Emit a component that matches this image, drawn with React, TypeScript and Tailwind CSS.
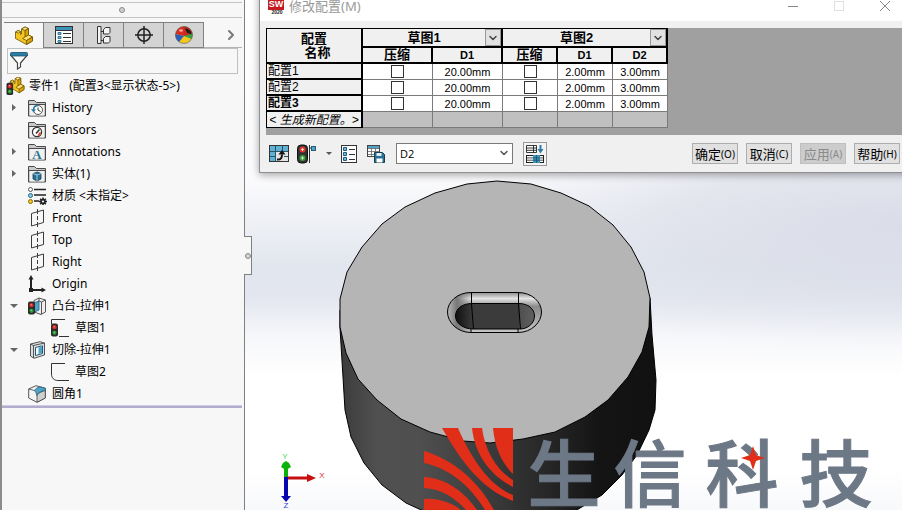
import React, { useState } from 'react';
import type { ReactNode } from 'react';
import { ChevronDown, ChevronRight } from 'lucide-react';
import { clsx } from 'clsx';

/* ---------- shared drawing parts ---------- */

function TrafficLight({ x = 0, y = 0 }: { x?: number; y?: number }) {
	return (
		<g transform={`translate(${x} ${y})`}>
			<rect x="0" y="0" width="7" height="13" rx="2" fill="#2b2b2b" />
			<circle cx="3.5" cy="3.7" r="2.1" fill="#e02a2a" />
			<circle cx="3.5" cy="9.3" r="2.1" fill="#2c9a32" />
			<circle cx="3.2" cy="3.2" r="0.7" fill="#ff9a90" />
			<circle cx="3.2" cy="8.8" r="0.7" fill="#86e08a" />
		</g>
	);
}

// L-shaped bracket seen from the upper right
function PartShape() {
	return (
		<g stroke="#6b5200" strokeWidth="0.8" strokeLinejoin="round">
			<path d="M1 6l2.500-1.500L6 5.500v3l1-.5V3l3.500-2L14 2.500V9l4 2v4l-6 3.500L1 12.500z" fill="#f4c521" />
			<path d="M7 3l3.500-2L14 2.500 10.500 4.500z" fill="#ffe88a" />
			<path d="M10.500 4.500L14 2.500V9l-3.500 2z" fill="#d9a20d" />
			<path d="M1 6l2.500-1.500L6 5.500 4 7z" fill="#ffe88a" />
			<path d="M10.500 11L14 9l4 2-6 3.500L8 12.500z" fill="#ffe06a" />
			<path d="M12 14.500L18 11v4l-6 3.500z" fill="#d9a20d" />
		</g>
	);
}

function FolderIcon({ children }: { children?: ReactNode }) {
	return (
		<svg className="h-[18px] w-[18px]" viewBox="0 0 18 18" aria-hidden="true">
			<path d="M.5 17V1.500h6l2 2h9V17z" fill="#c9c9c9" stroke="#4a4a4a" />
			<path d="M1 5.500h16" stroke="#4a4a4a" />
			<rect x="2" y="6" width="14" height="10.500" fill="#f1f1f1" />
			{children}
		</svg>
	);
}

function PlaneIcon() {
	return (
		<svg className="h-[18px] w-[18px]" viewBox="0 0 18 18" fill="none" stroke="#3c3c3c" aria-hidden="true">
			<path d="M3.500 4.500L15.500 1v12.500L3.500 17z" />
			<path d="M9.500 0v5M9.500 7v4M9.500 13v5" />
		</svg>
	);
}

/* ---------- feature tree ---------- */

interface TreeItem {
	id: string;
	label: string;
	icon: ReactNode;
	arrow?: 'open' | 'closed';
	nested?: boolean;
}

const treeItems: TreeItem[] = [
	{
		id: 'history',
		label: 'History',
		arrow: 'closed',
		icon: (
			<FolderIcon>
				<circle cx="10" cy="11" r="4.500" fill="#fff" stroke="#555" />
				<path d="M10 8.500V11l2.500 1.500" fill="none" stroke="#333" />
				<path d="M3 10l2.500 3.500L8 10.500z" fill="#2b7ea8" />
				<path d="M5.500 11c0-3 2-4.500 4.500-4.500" fill="none" stroke="#2b7ea8" strokeWidth="1.500" />
			</FolderIcon>
		),
	},
	{
		id: 'sensors',
		label: 'Sensors',
		icon: (
			<FolderIcon>
				<circle cx="9" cy="11" r="4.600" fill="#fff" stroke="#333" strokeWidth="1.200" />
				<path d="M9.500 15c2 0 3.500-1.500 3.500-4l-2 .5z" fill="#e4512b" />
				<path d="M8 12.500L11.500 8.500" stroke="#333" strokeWidth="1.500" />
			</FolderIcon>
		),
	},
	{
		id: 'annotations',
		label: 'Annotations',
		arrow: 'closed',
		icon: (
			<FolderIcon>
				<text x="9" y="15.500" textAnchor="middle" fontSize="13" fontWeight="700" fill="#2b7590" fontFamily="'Liberation Serif', serif">
					A
				</text>
			</FolderIcon>
		),
	},
	{
		id: 'solids',
		label: '实体(1)',
		arrow: 'closed',
		icon: (
			<FolderIcon>
				<path d="M5 8.500L9.500 7 13 8.500v5.500l-4 2-4-2z" fill="#2a6f93" stroke="#153f57" strokeWidth="0.8" />
				<path d="M5 8.500l4 1.500 4-1.500M9 10v6" fill="none" stroke="#bfe3f3" strokeWidth="0.8" />
			</FolderIcon>
		),
	},
	{
		id: 'material',
		label: '材质 <未指定>',
		icon: (
			<svg className="h-[18px] w-5" viewBox="0 0 20 18" aria-hidden="true">
				<path d="M6 2.500h12M6 8h12M6 14h5" stroke="#222" strokeWidth="1.600" />
				<circle cx="2.500" cy="2.500" r="2" fill="#fff" stroke="#555" />
				<circle cx="2.500" cy="8.500" r="2" fill="#7fd0f0" stroke="#27637d" />
				<circle cx="2.500" cy="14.500" r="2" fill="#f5c61d" stroke="#8a6c00" />
				<path d="M15 10.500v8M11 14.500h8M12.200 11.700l5.600 5.600M17.800 11.700l-5.600 5.600" stroke="#222" strokeWidth="1.600" />
				<circle cx="15" cy="14.500" r="2.800" fill="#222" />
				<circle cx="15" cy="14.500" r="1.100" fill="#f7f7f7" />
			</svg>
		),
	},
	{ id: 'front', label: 'Front', icon: <PlaneIcon /> },
	{ id: 'top', label: 'Top', icon: <PlaneIcon /> },
	{ id: 'right', label: 'Right', icon: <PlaneIcon /> },
	{
		id: 'origin',
		label: 'Origin',
		icon: (
			<svg className="h-[18px] w-[18px]" viewBox="0 0 18 18" aria-hidden="true">
				<path d="M3 15V3M3 15h12" stroke="#222" strokeWidth="2" />
				<path d="M3 0l2.500 4.500h-5zM18 15l-4.500-2.500v5z" fill="#222" />
				<rect x="1" y="13" width="4" height="4" fill="#222" />
			</svg>
		),
	},
	{
		id: 'boss',
		label: '凸台-拉伸1',
		arrow: 'open',
		icon: (
			<svg className="h-[18px] w-[18px]" viewBox="0 0 18 18" aria-hidden="true">
				<path d="M6 3.500L11 1l6.500 2v12L13 17.500 6 15z" fill="#eee" stroke="#444" strokeWidth="0.900" />
				<path d="M11 1v3l2.500 1v12M13.500 5l4-2" fill="none" stroke="#444" strokeWidth="0.900" />
				<path d="M5.500 6L11 4v9l-5.500 2.500z" fill="#4fa3c7" stroke="#1f5f7c" strokeWidth="0.8" />
				<TrafficLight x={0} y={4.500} />
			</svg>
		),
	},
	{
		id: 'sketch1',
		label: '草图1',
		nested: true,
		icon: (
			<svg className="h-[18px] w-[18px]" viewBox="0 0 18 18" aria-hidden="true">
				<path d="M.5 5V.5H14M8 17.500h10" fill="none" stroke="#333" />
				<TrafficLight x={0} y={4.500} />
			</svg>
		),
	},
	{
		id: 'cut',
		label: '切除-拉伸1',
		arrow: 'open',
		icon: (
			<svg className="h-[18px] w-[18px]" viewBox="0 0 18 18" aria-hidden="true">
				<path d="M2.500 3L12 .7l4.500 1.300V14L6 17.300 2.500 15z" fill="#ddd" stroke="#444" strokeWidth="0.900" />
				<path d="M2.500 3L5.500 4.500V17M5.500 4.500l11-2.500" fill="none" stroke="#444" strokeWidth="0.900" />
				<path d="M7.500 6.500l7-1.700v7.700l-7 2z" fill="#fff" stroke="#1f5f7c" />
				<path d="M10.500 6.500l3.500-.8v6.300l-3.500 1z" fill="#4fa3c7" />
			</svg>
		),
	},
	{
		id: 'sketch2',
		label: '草图2',
		nested: true,
		icon: (
			<svg className="h-[18px] w-[18px]" viewBox="0 0 18 18" aria-hidden="true">
				<path d="M14 .5H.5V11c0 4 2.500 6.500 6.500 6.500h11" fill="none" stroke="#333" />
			</svg>
		),
	},
	{
		id: 'fillet',
		label: '圆角1',
		icon: (
			<svg className="h-[18px] w-[18px]" viewBox="0 0 18 18" aria-hidden="true">
				<path d="M.7 4L8 .7l9.300 2.600v9.700L9 17.300.7 13z" fill="#f4f4f4" stroke="#444" strokeWidth="0.900" />
				<path d="M9 17.300V9l8.300-4v8z" fill="#cfcfcf" stroke="#444" strokeWidth="0.8" />
				<path d="M6.500 5.500C8 3 10.500 1.800 13 2l4.300 1.300v2.500C13.500 5.500 10.500 7 9 10.500c-.5-2-1.300-3.800-2.500-5z" fill="#4fa3c7" stroke="#1f5f7c" strokeWidth="0.8" />
				<path d="M.7 4L6.500 5.500" stroke="#444" strokeWidth="0.8" />
			</svg>
		),
	},
];

function TreeRow({ item }: { item: TreeItem }) {
	return (
		<li className={clsx('flex h-[22px] items-center', item.nested ? 'pl-[49px]' : 'pl-1')}>
			{!item.nested && (
				<span className="flex w-[22px] shrink-0 items-center pl-1">
					{item.arrow && (
						<button type="button" aria-label={`Toggle ${item.label}`}>
							<svg className="h-2 w-2" viewBox="0 0 8 8" fill="#666" aria-hidden="true">
								{item.arrow === 'closed' ? <path d="M2 0v7l4-3.500z" /> : <path d="M0 2h8L4 6z" />}
							</svg>
						</button>
					)}
				</span>
			)}
			<span className="flex w-6 shrink-0 items-center">{item.icon}</span>
			<span>{item.label}</span>
		</li>
	);
}

/* ---------- sidebar ---------- */

const tabs: { id: string; label: string; icon: ReactNode }[] = [
	{
		id: 'features',
		label: 'Feature tree',
		icon: (
			<svg className="h-5 w-5" viewBox="0 0 19 20" aria-hidden="true">
				<PartShape />
			</svg>
		),
	},
	{
		id: 'properties',
		label: 'Properties',
		icon: (
			<svg className="h-[18px] w-[18px]" viewBox="0 0 18 18" aria-hidden="true">
				<rect x=".5" y=".5" width="17" height="17" fill="#fff" stroke="#333" />
				<path d="M1 1h16v3H1z" fill="#3d93b8" />
				<path d="M1 4.500h16" stroke="#333" />
				<path d="M3 6.500h3v2H3zM3 10.500h3v2H3zM3 14.500h3v2H3z" fill="#6bbbdc" stroke="#1f5f7c" strokeWidth="0.800" />
				<path d="M8 7.500h8M8 11.500h8M8 15.500h8" stroke="#333" />
			</svg>
		),
	},
	{
		id: 'configurations',
		label: 'Configurations',
		icon: (
			<svg className="h-[18px] w-4" viewBox="0 0 16 18" fill="#f4f4f4" stroke="#333" aria-hidden="true">
				<path d="M1.500 17.500V.5H5v17zM5 5.500h3M5 14.500h3" />
				<path d="M7.500 3.500l2-2h4.500v5l-1.500 1.500h-5zM7.500 12.500l2-2h4.500v5l-1.500 1.500h-5z" />
			</svg>
		),
	},
	{
		id: 'dimxpert',
		label: 'Dimensions',
		icon: (
			<svg className="h-[18px] w-[18px]" viewBox="0 0 18 18" fill="none" stroke="#222" strokeWidth="1.500" aria-hidden="true">
				<circle cx="9" cy="9" r="6.200" />
				<path d="M9 0v18M0 9h18" />
			</svg>
		),
	},
	{
		id: 'display',
		label: 'Display',
		icon: (
			<svg className="h-[18px] w-[18px]" viewBox="0 0 18 18" aria-hidden="true">
				<circle cx="9" cy="9" r="8.500" fill="#f3c81c" />
				<path d="M9 10L.5 8A8.500 8.500 0 0 1 9 .5z" fill="#d92b1f" />
				<path d="M.5 8L9 10l-5 6A8.500 8.500 0 0 1 .5 8z" fill="#2a5fc0" />
				<path d="M9 .5a8.500 8.500 0 0 1 7.500 12.500L9 10z" fill="#36a044" />
				<path d="M9 .5a8.500 8.500 0 0 1 8.400 7L9 10z" fill="#c42a22" />
				<path d="M10 2.500c3.500 0 6 2.500 6.500 6L12 6.500z" fill="#1b1b1b" />
				<ellipse cx="6" cy="4.500" rx="2" ry="1.300" fill="#fff" opacity="0.600" />
				<circle cx="9" cy="9" r="8.500" fill="none" stroke="#555" strokeWidth="0.600" />
			</svg>
		),
	},
];

function Sidebar() {
	const [activeTab, setActiveTab] = useState('features');

	return (
		<aside className="relative z-10 flex w-[245px] shrink-0 flex-col border-r border-[#808080] bg-[#f7f7f7]">
			<div className="flex min-h-0 flex-1 flex-col border-l-2 border-[#8c8c8c] pr-0.5">
				<div className="mt-0.5 flex h-4 items-center justify-center border-y border-[#c4c4c4]">
					<span className="h-1.5 w-1.5 rounded-full border border-[#8a8a8a] bg-[#d0d0d0]" />
				</div>

				<div className="mt-1 flex pl-0.5">
					<div role="tablist" className="flex h-[26px] border-t border-[#808080]">
						{tabs.map((tab) => (
							<button
								key={tab.id}
								type="button"
								role="tab"
								aria-label={tab.label}
								aria-selected={tab.id === activeTab}
								onClick={() => setActiveTab(tab.id)}
								className={clsx(
									'flex w-10 items-center justify-center border-r border-[#808080]',
									tab.id === activeTab ? 'bg-[#f7f7f7]' : 'border-b bg-[#d4d4d4]',
								)}
							>
								{tab.icon}
							</button>
						))}
					</div>
					<button type="button" aria-label="More tabs" className="flex flex-1 items-center justify-end border-b border-[#b4b4b4] pr-[3px] text-[#777]">
						<ChevronRight size={16} strokeWidth={3} />
					</button>
				</div>

				<label className="mr-1 ml-[5px] flex h-[26px] items-center border border-[#c0c0c0] pl-0.5">
					<svg className="h-[18px] w-[18px] shrink-0" viewBox="0 0 18 18" aria-hidden="true">
						<path d="M1 3.500l6.500 7.500v6l3-2v-4L17 3.500z" fill="#fff" stroke="#444" strokeWidth="1.200" />
						<rect x=".5" y=".5" width="17" height="3.500" rx="1" fill="#2b7ea8" stroke="#164b66" strokeWidth="0.800" />
					</svg>
					<input type="text" aria-label="Filter" className="min-w-0 flex-1 bg-transparent outline-none" />
				</label>

				<div className="mt-px flex h-[22px] items-center pl-1">
					<svg className="mr-1 h-[19px] w-[19px] shrink-0" viewBox="0 0 19 20" aria-hidden="true">
						<g transform="translate(3 -1) scale(.86 .95)">
							<PartShape />
						</g>
						<TrafficLight x={0} y={6} />
					</svg>
					<span className="whitespace-pre">零件1   (配置3&lt;显示状态-5&gt;)</span>
				</div>
				<ul>
					{treeItems.map((item) => (
						<TreeRow key={item.id} item={item} />
					))}
				</ul>
				<div className="h-[3px] border-t border-[#cfcbe0] bg-[#b2adcc]" />
			</div>

			{/* Splitter handle sticks out over the viewport */}
			<button
				type="button"
				aria-label="Collapse panel"
				className="absolute top-[236px] left-full flex h-[39px] w-2 items-center justify-center border-y border-r border-[#808080] bg-[#f7f7f7]"
			>
				<span className="h-1.5 w-1.5 rounded-full border border-[#8a8a8a] bg-[#d0d0d0]" />
			</button>
		</aside>
	);
}

/* ---------- model view ---------- */

const logoGlyphs = [
	{ char: '生', x: 564 },
	{ char: '信', x: 650 },
	{ char: '科', x: 742 },
	{ char: '技', x: 836 },
];

function ModelView() {
	return (
		<svg className="absolute inset-0 h-full w-full" viewBox="245 0 657 510" preserveAspectRatio="xMinYMin slice" role="img" aria-label="Model view">
			<defs>
				<linearGradient id="sky" x1="0" y1="0" x2="0" y2="1">
					<stop offset="0" stopColor="#ffffff" />
					<stop offset="0.35" stopColor="#fbfbfd" />
					<stop offset="0.52" stopColor="#e2e6ee" />
					<stop offset="0.58" stopColor="#e3e6ef" />
					<stop offset="0.66" stopColor="#f6f7fa" />
					<stop offset="0.74" stopColor="#ffffff" />
					<stop offset="0.92" stopColor="#ffffff" />
					<stop offset="1" stopColor="#f8f9fb" />
				</linearGradient>
				<radialGradient id="haze" gradientUnits="userSpaceOnUse" cx="0" cy="0" r="1" gradientTransform="translate(900 225) scale(460 125)">
					<stop offset="0" stopColor="#dadde8" />
					<stop offset="0.5" stopColor="#dcdfe9" stopOpacity="0.7" />
					<stop offset="1" stopColor="#e2e6ef" stopOpacity="0" />
				</radialGradient>
				<linearGradient id="side" x1="0" y1="0" x2="1" y2="0">
					<stop offset="0" stopColor="#3c3c3c" />
					<stop offset="0.12" stopColor="#505050" />
					<stop offset="0.25" stopColor="#4f4f4f" />
					<stop offset="0.5" stopColor="#383838" />
					<stop offset="0.68" stopColor="#242424" />
					<stop offset="0.82" stopColor="#141414" />
					<stop offset="1" stopColor="#111111" />
				</linearGradient>
				<linearGradient id="bevel" x1="0" y1="0" x2="0" y2="1">
					<stop offset="0" stopColor="#8c8c8c" />
					<stop offset="0.15" stopColor="#e4e4e4" />
					<stop offset="0.35" stopColor="#8a8a8a" />
					<stop offset="1" stopColor="#c6c6c6" />
				</linearGradient>
				<linearGradient id="bevelLeft" x1="0" y1="0" x2="1" y2="0">
					<stop offset="0" stopColor="#b8b8b8" />
					<stop offset="0.4" stopColor="#777777" />
					<stop offset="1" stopColor="#777777" stopOpacity="0" />
				</linearGradient>
				<linearGradient id="pocket" x1="0" y1="0" x2="1" y2="0">
					<stop offset="0" stopColor="#101010" />
					<stop offset="0.22" stopColor="#3b3b3b" />
					<stop offset="0.8" stopColor="#3b3b3b" />
					<stop offset="0.82" stopColor="#505050" />
					<stop offset="1" stopColor="#606060" />
				</linearGradient>
			</defs>

			<rect x="245" y="0" width="657" height="510" fill="url(#sky)" />
			<rect x="245" y="0" width="657" height="510" fill="url(#haze)" />

			{/* cylinder */}
			<path
				d="M340 310L340 328 345 410 351 437 364 463 382 485 406 503 430 514H570L602 495 622 475 637 455 649 430 655 410 656 380 652 335 650 298z"
				fill="url(#side)"
				stroke="#000"
			/>
			<path
				d="M497 181L531 184 561 193 589 206 613 225 631 247 644 272 650 298 649 327 642 352 628 377 608 400 585 417 555 432 523 439 490 443 463 441 430 432 401 419 377 400 358 379 346 353 340 327 340 299 347 272 362 247 382 224 405 207 435 193 467 184z"
				fill="#b5b5b5"
				stroke="#000"
			/>

			{/* slot */}
			<path d="M471 292.500H518C532 292.500 541.500 302 541.500 312S532 332.500 518 332.500H471C457 332.500 447.500 322 447.500 312S457 292.500 471 292.500z" fill="url(#bevel)" />
			<path d="M471 292.500C457 292.500 447.500 302 447.500 312S457 332.500 471 332.500z" fill="url(#bevelLeft)" />
			<path d="M472 303.500H519C528 303.500 534.500 309 534.500 316S528 329 520 329H473C463 329 455.500 323 455.500 316S462 303.500 472 303.500z" fill="url(#pocket)" stroke="#000" />
			<path
				d="M471 292.500H518C532 292.500 541.500 302 541.500 312S532 332.500 518 332.500H471C457 332.500 447.500 322 447.500 312S457 292.500 471 292.500zM471.500 293v11l2 25M471 329v3M518.500 293v11l2 25M518 329v3"
				fill="none"
				stroke="#000"
			/>

			{/* orientation triad */}
			<g>
				<path d="M286 478v-12" stroke="#0ab30a" strokeWidth="4" />
				<path d="M281 467l2-4 3-2 3 2 2 4-5 3z" fill="#0ab30a" />
				<path d="M286 478h24" stroke="#c80f0f" strokeWidth="3" />
				<path d="M307 474l9 4-9 4z" fill="#c80f0f" />
				<path d="M286 477v20" stroke="#0707b0" strokeWidth="4" />
				<path d="M281 496h10l-5 6z" fill="#0707b0" />
				<g fontFamily="'Liberation Sans', Arial, sans-serif" fontSize="8" textAnchor="middle">
					<text x="285" y="459" fill="#3fdc3f">Y</text>
					<text x="322" y="478" fill="#e03030">X</text>
					<text x="286" y="508" fill="#2a3fe0">Z</text>
				</g>
			</g>

			{/* logo */}
			<g fill="#e02e18">
				<path d="M493 428h20v46c-10-10-18-24-20-46z" />
				<path d="M472 428h10c3 22 14 42 31 52v7c-23-12-38-32-41-59z" />
				<path d="M442 428h16c14 32 32 58 55 67v6c-31-12-51-38-71-73z" />
				<path d="M424 451c30 9 54 30 70 59h-9c-16-26-37-42-61-47z" />
				<path d="M424 477c21 1 40 14 53 33h-11c-12-13-25-21-42-22z" />
				<path d="M424 499c14-1 26 3 37 11h-37z" />
			</g>
			<g
				fill="#6d7886"
				stroke="#6d7886"
				strokeWidth="1"
				fontFamily="'Noto Sans CJK SC', sans-serif"
				fontWeight="500"
				fontSize="73"
				textAnchor="middle"
			>
				{logoGlyphs.map((glyph) => (
					<text key={glyph.char} x={glyph.x} y="501">
						{glyph.char}
					</text>
				))}
			</g>
			<path d="M753 446l3 9 9 3-9 3-3 9-3-9-9-3 9-3z" fill="#e02e18" />
		</svg>
	);
}

/* ---------- configuration dialog ---------- */

const configRows = [
	{ name: '配置1', active: false, values: ['20.00mm', '2.00mm', '3.00mm'] },
	{ name: '配置2', active: false, values: ['20.00mm', '2.00mm', '3.00mm'] },
	{ name: '配置3', active: true, values: ['20.00mm', '2.00mm', '3.00mm'] },
];

function SuppressBox({ label }: { label: string }) {
	return (
		<td className="border-r border-b border-[#7a7a7a] bg-white p-0">
			<input
				type="checkbox"
				aria-label={label}
				className="mx-auto block h-[13px] w-[13px] appearance-none border border-[#333] bg-white checked:bg-[#2b7ea8]"
			/>
		</td>
	);
}

function ValueCell({ children }: { children: ReactNode }) {
	return <td className="border-r border-b border-[#7a7a7a] bg-white p-0 text-center">{children}</td>;
}

function GroupHeader({ title, span }: { title: string; span: number }) {
	return (
		<th colSpan={span} scope="colgroup" className="border-t border-r-2 border-b-2 border-black p-0">
			<div className="flex h-[17px] items-center">
				<span className="flex-1 text-center text-[13px] leading-4">{title}</span>
				<button
					type="button"
					aria-label={`${title} options`}
					className="flex h-[17px] w-4 items-center justify-center border border-[#999] bg-[#e1e1e1] text-[#444]"
				>
					<ChevronDown size={12} strokeWidth={3} className="shrink-0" />
				</button>
			</div>
		</th>
	);
}

const subHeader = 'border-r-2 border-b-2 border-black p-0 text-center leading-3';

function ConfigTable() {
	return (
		<table className="w-[402px] table-fixed border-separate border-spacing-0 border-l border-black font-['Liberation_Sans','Noto_Sans_CJK_SC',sans-serif] text-[11px] leading-[14px] text-black">
			<colgroup>
				<col className="w-[96px]" />
				<col className="w-[70px]" />
				<col className="w-[70px]" />
				<col className="w-[55px]" />
				<col className="w-[55px]" />
				<col className="w-[55px]" />
			</colgroup>
			<thead className="bg-[#f0f0f0] font-bold">
				<tr className="h-5">
					<th rowSpan={2} scope="col" className="border-t border-r-2 border-b-2 border-black p-0 text-[13px] leading-[14px]">
						配置
						<br />
						&nbsp;&nbsp;名称
					</th>
					<GroupHeader title="草图1" span={2} />
					<GroupHeader title="草图2" span={3} />
				</tr>
				<tr className="h-4">
					<th scope="col" className={clsx(subHeader, 'text-[13px]')}>压缩</th>
					<th scope="col" className={subHeader}>D1</th>
					<th scope="col" className={clsx(subHeader, 'text-[13px]')}>压缩</th>
					<th scope="col" className={subHeader}>D1</th>
					<th scope="col" className={subHeader}>D2</th>
				</tr>
			</thead>
			<tbody>
				{configRows.map((row) => (
					<tr key={row.name} className="h-4">
						<th
							scope="row"
							className={clsx(
								'border-r-2 border-b-2 border-black bg-[#f0f0f0] p-0 pl-px text-left text-[12px] leading-[14px]',
								row.active ? 'font-bold' : 'font-normal',
							)}
						>
							{row.name}
						</th>
						<SuppressBox label={`${row.name} 草图1 压缩`} />
						<ValueCell>{row.values[0]}</ValueCell>
						<SuppressBox label={`${row.name} 草图2 压缩`} />
						<ValueCell>{row.values[1]}</ValueCell>
						<ValueCell>{row.values[2]}</ValueCell>
					</tr>
				))}
				<tr className="h-4 bg-[#c0c0c0]">
					<th scope="row" className="border-r-2 border-b border-black bg-[#f0f0f0] p-0 text-center text-[12px] leading-[14px] font-normal whitespace-nowrap italic">
						&lt; 生成新配置。&gt;
					</th>
					{[1, 2, 3, 4, 5].map((n) => (
						<td key={n} className="border-r border-b border-[#7a7a7a] p-0" />
					))}
				</tr>
			</tbody>
		</table>
	);
}

function ToolIcon({ label, children, className }: { label: string; children: ReactNode; className?: string }) {
	return (
		<button type="button" aria-label={label} className={clsx('flex shrink-0 items-center justify-center', className)}>
			{children}
		</button>
	);
}

function DialogToolbar() {
	return (
		<div className="flex h-[37px] items-center pr-[11px] pl-[9px]">
			<ToolIcon label="Link table">
				<svg className="h-[18px] w-5" viewBox="0 0 20 18" aria-hidden="true">
					<rect x=".5" y=".5" width="19" height="16" fill="#e4e4e4" stroke="#333" />
					<path d="M1 1h18v5H1zM1 6h5v10H1z" fill="#5fb0d2" />
					<path d="M1 6.500h18M1 11.500h5M15 11.500h4M6.500 1v15M13.500 1v5" stroke="#2a5568" />
					<path d="M8 14.500c4 .5 5-2 5-5" fill="none" stroke="#111" strokeWidth="2" />
					<path d="M9.500 9.500h7L13 5z" fill="#111" />
				</svg>
			</ToolIcon>
			<ToolIcon label="Suppression" className="ml-2">
				<svg className="h-5 w-5" viewBox="0 0 20 20" aria-hidden="true">
					<rect x=".5" y="1" width="10" height="18" rx="3.500" fill="#333" stroke="#111" />
					<circle cx="5.500" cy="5.500" r="3" fill="#e23a2a" />
					<circle cx="5.500" cy="14" r="3" fill="#3ba03a" />
					<path d="M5.500 4v3M4 5.500h3M5.500 12.500v3M4 14h3" stroke="#fff" strokeWidth="0.700" />
					<path d="M12.500 1v18M13 4h2" stroke="#333" />
					<rect x="14.500" y="2.500" width="4" height="4" fill="#4fa3c7" stroke="#1f5f7c" />
				</svg>
			</ToolIcon>
			<ToolIcon label="Suppression menu" className="ml-2">
				<svg className="h-2 w-2" viewBox="0 0 8 8" fill="#555" aria-hidden="true">
					<path d="M1 2h6L4 5z" />
				</svg>
			</ToolIcon>
			<ToolIcon label="Properties" className="ml-2">
				<svg className="h-[18px] w-4" viewBox="0 0 16 18" aria-hidden="true">
					<rect x=".5" y=".5" width="15" height="17" fill="#fff" stroke="#333" />
					<path d="M2.500 2.500h3v3h-3zM2.500 7.500h3v3h-3zM2.500 12.500h3v3h-3z" fill="#6bbbdc" stroke="#1f5f7c" />
					<path d="M8 4.500h6M8 9.500h6M8 14.500h6" stroke="#333" />
				</svg>
			</ToolIcon>
			<ToolIcon label="Save table view" className="ml-[10px]">
				<svg className="h-[18px] w-[18px]" viewBox="0 0 18 18" aria-hidden="true">
					<rect x=".5" y=".5" width="12" height="11" fill="#fff" stroke="#444" />
					<path d="M1 1h11v2.500H1z" fill="#4fa3c7" />
					<path d="M1 3.500h11M1 6.500h11M1 9.500h11M4.500 3v8M8.500 3v8" stroke="#666" strokeWidth="0.800" />
					<path d="M7.500 7.500h8l2 2v8h-10z" fill="#2b6f93" stroke="#173c50" />
					<path d="M9.500 8h5v3h-5z" fill="#dfeef5" />
					<path d="M9.500 13.500h6v4h-6z" fill="#fff" />
				</svg>
			</ToolIcon>

			<div className="relative ml-[11px] h-[21px] w-[117px]">
				<select
					aria-label="Table view"
					defaultValue="D2"
					className="h-full w-full appearance-none border border-[#7a7a7a] bg-white pl-[3px] font-['Open_Sans','Noto_Sans_CJK_SC',sans-serif] text-[11px] leading-4 text-black"
				>
					<option>D2</option>
					<option>D1</option>
				</select>
				<ChevronDown size={12} strokeWidth={3} className="pointer-events-none absolute top-1 right-[3px] text-[#555]" />
			</div>

			<ToolIcon label="Apply to all" className="ml-[10px] h-6 w-6 border border-[#999] bg-[#f4f4f4]">
				<svg className="h-[18px] w-[18px]" viewBox="0 0 18 18" aria-hidden="true">
					<path d="M.5.5h10v7H.5zM.5 3h10M.5 5.300h10M7.500.5v7" fill="#fff" stroke="#222" strokeWidth="0.900" />
					<path d="M14.500 0v5" stroke="#2b7ea8" strokeWidth="2" />
					<path d="M11.500 4h6L14.500 8.500z" fill="#2b7ea8" />
					<rect x=".5" y="10.500" width="17" height="7" fill="#fff" stroke="#222" />
					<path d="M1 12.900h16M1 15.200h16" stroke="#222" strokeWidth="0.800" />
					<path d="M7 10h7v8H7z" fill="#3d93b8" />
					<path d="M7 12.900h7M7 15.200h7M10.500 10v8" stroke="#174a63" strokeWidth="0.700" />
				</svg>
			</ToolIcon>

			<div className="ml-auto flex gap-2">
				<DialogButton text="确定" hotkey="O" />
				<DialogButton text="取消" hotkey="C" />
				<DialogButton text="应用" hotkey="A" disabled />
				<DialogButton text="帮助" hotkey="H" />
			</div>
		</div>
	);
}

function DialogButton({ text, hotkey, disabled = false }: { text: string; hotkey: string; disabled?: boolean }) {
	return (
		<button
			type="button"
			disabled={disabled}
			className="flex h-[21px] w-[46px] items-center justify-center border border-[#adadad] bg-[#e1e1e1] text-[13px] leading-4 whitespace-nowrap text-black disabled:border-[#bfbfbf] disabled:bg-[#cccccc] disabled:text-[#8a8a8a]"
		>
			{text}
			<span className="text-[10px]">({hotkey})</span>
		</button>
	);
}

function ConfigDialog() {
	return (
		<section
			role="dialog"
			aria-label="修改配置"
			className="absolute -top-[10px] -right-[10px] left-[14px] border border-[#8f8f8f] bg-[#f0f0f0] shadow-[0_2px_8px_rgba(0,0,0,0.35)]"
		>
			<header className="flex h-[30px] items-center bg-white pr-5 pl-2 text-[#999]">
				<svg className="h-[18px] w-[17px]" viewBox="0 0 17 18" aria-hidden="true">
					<rect x="0" y="0" width="16" height="13" fill="#c31b20" />
					<g fontFamily="'Liberation Sans', Arial, sans-serif" fontWeight="700" textAnchor="middle">
						<text x="8" y="10" fontSize="9" fill="#fff">SW</text>
						<text x="9" y="17" fontSize="5" fill="#222">2020</text>
					</g>
				</svg>
				<h2 className="ml-1 text-[13px] leading-4">修改配置(M)</h2>
				<div className="ml-auto flex items-center gap-[34px]">
					<button type="button" aria-label="Minimize">
						<svg className="h-3 w-3" viewBox="0 0 12 12" stroke="#888" aria-hidden="true">
							<path d="M1 6.500h10" />
						</svg>
					</button>
					<button type="button" aria-label="Maximize" disabled>
						<svg className="h-3 w-3" viewBox="0 0 12 12" fill="none" stroke="#e0e0e0" aria-hidden="true">
							<rect x="1.500" y="1.500" width="9" height="9" />
						</svg>
					</button>
					<button type="button" aria-label="Close">
						<svg className="h-3 w-3" viewBox="0 0 12 12" stroke="#888" aria-hidden="true">
							<path d="M1 1l10 10M11 1L1 11" />
						</svg>
					</button>
				</div>
			</header>
			<div className="mt-[7px] ml-[6px] bg-[#a0a0a0] pb-[7px]">
				<ConfigTable />
			</div>
			<DialogToolbar />
		</section>
	);
}

export default function App() {
	return (
		<div className="flex h-screen overflow-hidden bg-white font-['Noto_Sans','Noto_Sans_CJK_SC',sans-serif] text-[12px] leading-4 text-black">
			<Sidebar />
			<main className="relative min-w-0 flex-1 overflow-hidden">
				<ModelView />
				<ConfigDialog />
			</main>
		</div>
	);
}
